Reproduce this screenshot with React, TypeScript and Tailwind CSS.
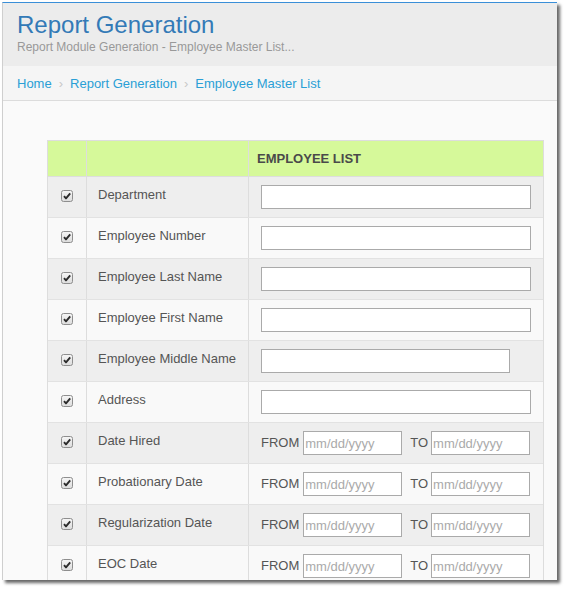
import React from 'react';

const rows: { label: string; kind: 'text' | 'short' | 'date' }[] = [
  { label: 'Department', kind: 'text' },
  { label: 'Employee Number', kind: 'text' },
  { label: 'Employee Last Name', kind: 'text' },
  { label: 'Employee First Name', kind: 'text' },
  { label: 'Employee Middle Name', kind: 'short' },
  { label: 'Address', kind: 'text' },
  { label: 'Date Hired', kind: 'date' },
  { label: 'Probationary Date', kind: 'date' },
  { label: 'Regularization Date', kind: 'date' },
  { label: 'EOC Date', kind: 'date' },
];

function CheckBox() {
  return (
    <svg width="12" height="12" viewBox="0 0 12 12" className="block">
      <defs>
        <linearGradient id="cbg" x1="0" y1="0" x2="0" y2="1">
          <stop offset="0" stopColor="#f6f6f6" />
          <stop offset="1" stopColor="#dcdcdc" />
        </linearGradient>
      </defs>
      <rect x="0.5" y="0.5" width="11" height="11" rx="2" fill="url(#cbg)" stroke="#8e8e8e" />
      <path d="M3 6.2 L5 8.4 L9.2 3.4" fill="none" stroke="#2b2b2b" strokeWidth="1.9" strokeLinejoin="round" />
    </svg>
  );
}

function DateBox() {
  return (
    <input
      type="text"
      placeholder="mm/dd/yyyy"
      className="h-[24px] w-[99px] border border-[#aaa] bg-white px-[1px] text-[13px] text-[#555] outline-none placeholder:text-[#aaa]"
    />
  );
}

export default function App() {
  return (
    <div className="h-[589px] w-full overflow-hidden bg-white font-['Liberation_Sans',Arial,sans-serif]">
      <div className="ml-[2px] mt-[2px] h-[578px] w-[555px] overflow-hidden border-l border-t border-l-[#cfcfcf] border-t-[#3a8fd8] bg-[#fafafa] shadow-[3px_3px_3px_rgba(0,0,0,0.6)]">
        {/* Header */}
        <div className="bg-[#ececec] pb-[11px] pl-[14px] pt-[8px]">
          <div className="text-[24px] leading-[28px] text-[#337ab7]">Report Generation</div>
          <div className="text-[12px] leading-[16px] text-[#999]">
            Report Module Generation - Employee Master List...
          </div>
        </div>

        {/* Breadcrumb */}
        <div className="flex items-center border-b border-[#dcdcdc] bg-[#f5f5f5] pb-[6px] pl-[14px] pt-[8px] text-[13px] leading-5 text-[#2a9fd6]">
          <span>Home</span>
          <span className="mx-[7px] text-[#c8c8c8]">›</span>
          <span>Report Generation</span>
          <span className="mx-[7px] text-[#c8c8c8]">›</span>
          <span>Employee Master List</span>
        </div>

        {/* Body */}
        <div className="pl-[44px] pt-[39px]">
          <div className="w-[497px] border border-[#ddd]">
            <div className="flex h-[36px] border-b border-[#ddd] bg-[#d6f99a]">
              <div className="w-[38px]" />
              <div className="w-[162px] border-l border-[#ddd]" />
              <div className="flex flex-1 items-center border-l border-[#ddd] pl-[8px] text-[13px] font-bold text-[#4a4a4a]">
                EMPLOYEE LIST
              </div>
            </div>
            {rows.map((r, i) => (
              <div
                key={r.label}
                className={`flex h-[41px] border-b border-[#e2e2e2] ${i % 2 === 0 ? 'bg-[#eeeeee]' : 'bg-[#f9f9f9]'}`}
              >
                <div className="flex w-[38px] justify-center pt-[13px]">
                  <CheckBox />
                </div>
                <div className="w-[162px] border-l border-[#ddd] pl-[11px] pt-[8px] text-[13px] leading-5 text-[#555]">
                  {r.label}
                </div>
                <div className="flex flex-1 items-center border-l border-[#ddd] pl-[12px] text-[13px] text-[#555]">
                  {r.kind === 'date' ? (
                    <>
                      <span>FROM</span>
                      <span className="ml-[4px] flex">
                        <DateBox />
                      </span>
                      <span className="ml-[8px]">TO</span>
                      <span className="ml-[3px] flex">
                        <DateBox />
                      </span>
                    </>
                  ) : (
                    <input
                      type="text"
                      className={`h-[24px] border border-[#aaa] bg-white outline-none ${r.kind === 'short' ? 'w-[249px]' : 'w-[270px]'}`}
                    />
                  )}
                </div>
              </div>
            ))}
          </div>
        </div>
      </div>
    </div>
  );
}
